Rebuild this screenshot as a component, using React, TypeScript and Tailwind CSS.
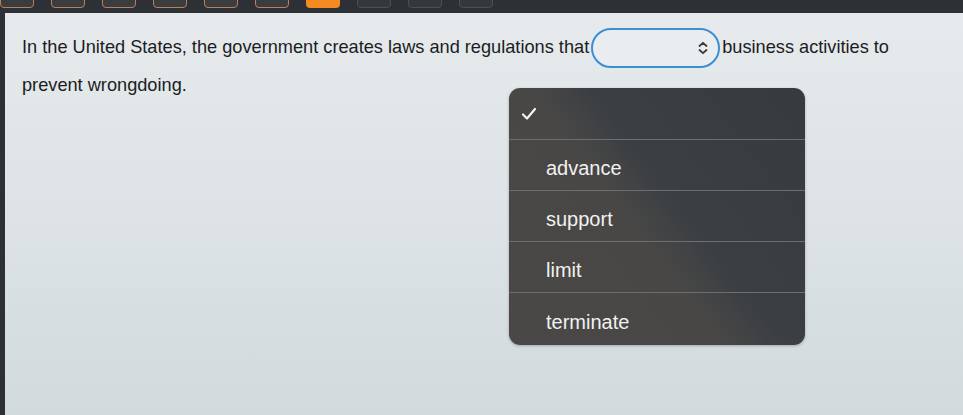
const options = ["advance", "support", "limit", "terminate"];

const tabs = [
  "done", "done", "done", "done", "done", "done", "current", "todo", "todo", "todo",
];

const SelectArrows = () => (
  <svg width="12" height="14" viewBox="0 0 12 14" fill="none" stroke="#3a3a3a" strokeWidth="1.8" strokeLinecap="round" strokeLinejoin="round">
    <path d="M2.5 5 6 1.8 9.5 5" />
    <path d="M2.5 9 6 12.2 9.5 9" />
  </svg>
);

const Check = () => (
  <svg width="16" height="14" viewBox="0 0 16 14" fill="none" stroke="#f2f2f2" strokeWidth="2.2" strokeLinecap="round" strokeLinejoin="round">
    <path d="M2 7.5 6 11.5 14 2" />
  </svg>
);

const App = () => {
  return (
    <div className="w-[963px] h-[415px] overflow-hidden bg-[#2d3135] flex flex-col font-['Liberation_Sans',Arial,sans-serif]">
      {/* question stepper */}
      <div className="h-[13px] flex gap-[17px] items-start shrink-0">
        {tabs.map((t, i) => (
          <div
            key={i}
            className={
              t === "current"
                ? "w-[34px] h-[12px] -mt-[4px] rounded-b-[4px] bg-[#f38a22]"
                : t === "done"
                ? "w-[34px] h-[12px] -mt-[4px] rounded-b-[4px] bg-[#3a3c3e] border-[1.5px] border-[#b9805f]"
                : "w-[34px] h-[12px] -mt-[4px] rounded-b-[4px] bg-[#34383b] border-[1.5px] border-[#4b5054]"
            }
          />
        ))}
      </div>

      <div className="relative flex-1 ml-[5px] bg-[linear-gradient(180deg,#e6eaec_0%,#dde3e6_50%,#d2dadd_100%)] pl-[17px] pr-[40px] pt-[15px]">
        <p className="text-[18.2px] leading-[38px] text-[#1b1d1f]">
          <span>In the United States, the government creates laws and regulations that</span>
          <span className="inline-flex align-middle -my-[2px] mx-[2px] w-[129px] h-[40px] rounded-full border-2 border-[#3d8fd3] bg-[#e9edef] items-center justify-end pr-[9px]">
            <SelectArrows />
          </span>
          <span>business activities to</span> <span>prevent wrongdoing.</span>
        </p>

        {/* open select menu */}
        <div className="absolute left-[504px] top-[75px] w-[296px] h-[257px] rounded-[11px] overflow-hidden bg-[linear-gradient(53deg,#4a4847_0%,#484746_44%,#3b3f43_56%,#363b40_100%)] shadow-[0_1px_3px_rgba(0,0,0,0.25)] flex flex-col text-[20px] text-[#f1f1f1]">
          <div className="h-[52px] flex items-center pl-[12px] border-b border-[#6b6f72]">
            <Check />
          </div>
          {options.map((o, i) => (
            <div
              key={o}
              className={
                i < options.length - 1
                  ? "h-[51px] flex items-center pl-[37px] pt-[6px] border-b border-[#6b6f72]"
                  : "flex-1 flex items-center pl-[37px] pt-[6px]"
              }
            >
              {o}
            </div>
          ))}
        </div>
      </div>
    </div>
  );
};

export default App;
